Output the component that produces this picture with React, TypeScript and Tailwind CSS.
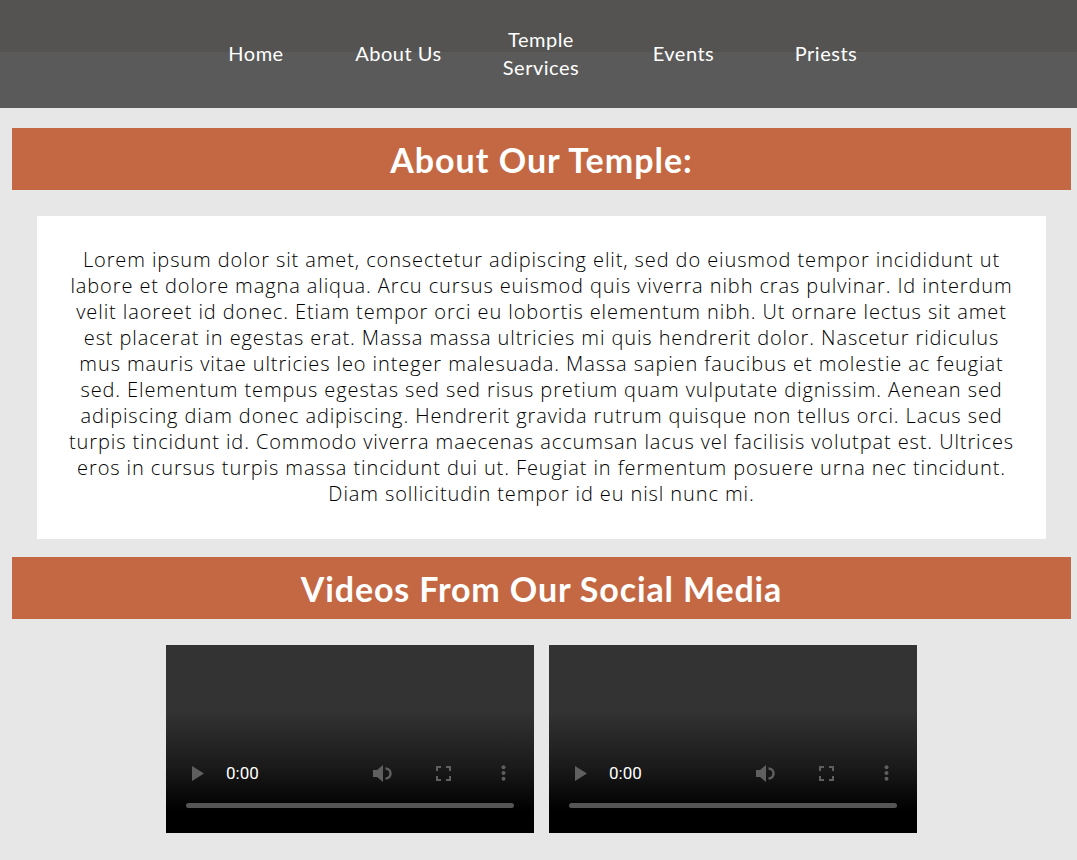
import React from 'react';

const navItems = ['Home', 'About Us', 'Temple Services', 'Events', 'Priests'];

const lorem =
  'Lorem ipsum dolor sit amet, consectetur adipiscing elit, sed do eiusmod tempor incididunt ut labore et dolore magna aliqua. Arcu cursus euismod quis viverra nibh cras pulvinar. Id interdum velit laoreet id donec. Etiam tempor orci eu lobortis elementum nibh. Ut ornare lectus sit amet est placerat in egestas erat. Massa massa ultricies mi quis hendrerit dolor. Nascetur ridiculus mus mauris vitae ultricies leo integer malesuada. Massa sapien faucibus et molestie ac feugiat sed. Elementum tempus egestas sed sed risus pretium quam vulputate dignissim. Aenean sed adipiscing diam donec adipiscing. Hendrerit gravida rutrum quisque non tellus orci. Lacus sed turpis tincidunt id. Commodo viverra maecenas accumsan lacus vel facilisis volutpat est. Ultrices eros in cursus turpis massa tincidunt dui ut. Feugiat in fermentum posuere urna nec tincidunt. Diam sollicitudin tempor id eu nisl nunc mi.';

const VideoBox: React.FC = () => (
  <div className="relative w-[368px] h-[188px] bg-[linear-gradient(to_bottom,#333333_0%,#333333_35%,#1a1a1a_65%,#000000_88%)]">
    {/* controls row */}
    <div className="absolute left-0 right-0 top-[119px] h-[18px] flex items-center px-[26px]">
      <svg width="12" height="15" viewBox="0 0 12 15" className="shrink-0">
        <path d="M0 0 L12 7.5 L0 15 Z" fill="#5f5f5f" />
      </svg>
      <span className="ml-[22px] text-[17px] leading-none text-white font-['Roboto',sans-serif]">0:00</span>
      <div className="flex-1" />
      <svg width="20" height="17" viewBox="0 0 20 17" className="shrink-0">
        <path d="M0 5 H4 L10 0 V17 L4 12 H0 Z" fill="#5f5f5f" />
        <path d="M12.5 3.5 A5 5 0 0 1 12.5 13.5" stroke="#5f5f5f" strokeWidth="2.5" fill="none" />
      </svg>
      <svg width="15" height="15" viewBox="0 0 15 15" className="ml-[43px] shrink-0">
        <path d="M1 5 V1 H5 M10 1 H14 V5 M14 10 V14 H10 M5 14 H1 V10" stroke="#5f5f5f" strokeWidth="2" fill="none" />
      </svg>
      <svg width="5" height="16" viewBox="0 0 5 16" className="ml-[50px] mr-[2px] shrink-0">
        <circle cx="2.5" cy="2.2" r="2" fill="#5f5f5f" />
        <circle cx="2.5" cy="8" r="2" fill="#5f5f5f" />
        <circle cx="2.5" cy="13.8" r="2" fill="#5f5f5f" />
      </svg>
    </div>
    {/* progress */}
    <div className="absolute left-[20px] right-[20px] top-[158px] h-[5px] rounded-full bg-[#555555]" />
  </div>
);

const App: React.FC = () => {
  return (
    <div className="min-h-screen bg-[#e7e7e7] font-['Lato',sans-serif] pb-[28px]">
      {/* Header */}
      <header className="h-[108px] bg-[linear-gradient(to_bottom,#545351_0,#545351_52px,#5a5a5a_52px,#5a5a5a_100%)] flex items-center justify-center pl-[5px] pb-[3px]">
        <nav className="flex items-center gap-[42.5px]">
          {navItems.map((item) => (
            <a key={item} className="w-[100px] text-center text-white text-[20px] leading-[28px] tracking-[0.5px]">
              {item}
            </a>
          ))}
        </nav>
      </header>

      <main className="pt-[20px]">
        <h2 className="ml-[12px] w-[1059px] h-[62px] bg-[#c46843] flex items-center justify-center text-white text-[34px] font-bold tracking-[1px]">
          About Our Temple:
        </h2>

        <div className="ml-[37px] w-[1009px] mt-[26px] bg-white pt-[31px] pb-[32px] px-[26px]">
          <p className="text-center text-black text-[20px] leading-[26px] font-light tracking-[0.9px] font-['Open_Sans',sans-serif]">{lorem}</p>
        </div>

        <h2 className="ml-[12px] w-[1059px] h-[62px] mt-[18px] bg-[#c46843] flex items-center justify-center text-white text-[34px] font-bold tracking-[0.85px]">
          Videos From Our Social Media
        </h2>

        <div className="mt-[26px] flex justify-center gap-[15px] pl-[6px]">
          <VideoBox />
          <VideoBox />
        </div>
      </main>
    </div>
  );
};

export default App;
